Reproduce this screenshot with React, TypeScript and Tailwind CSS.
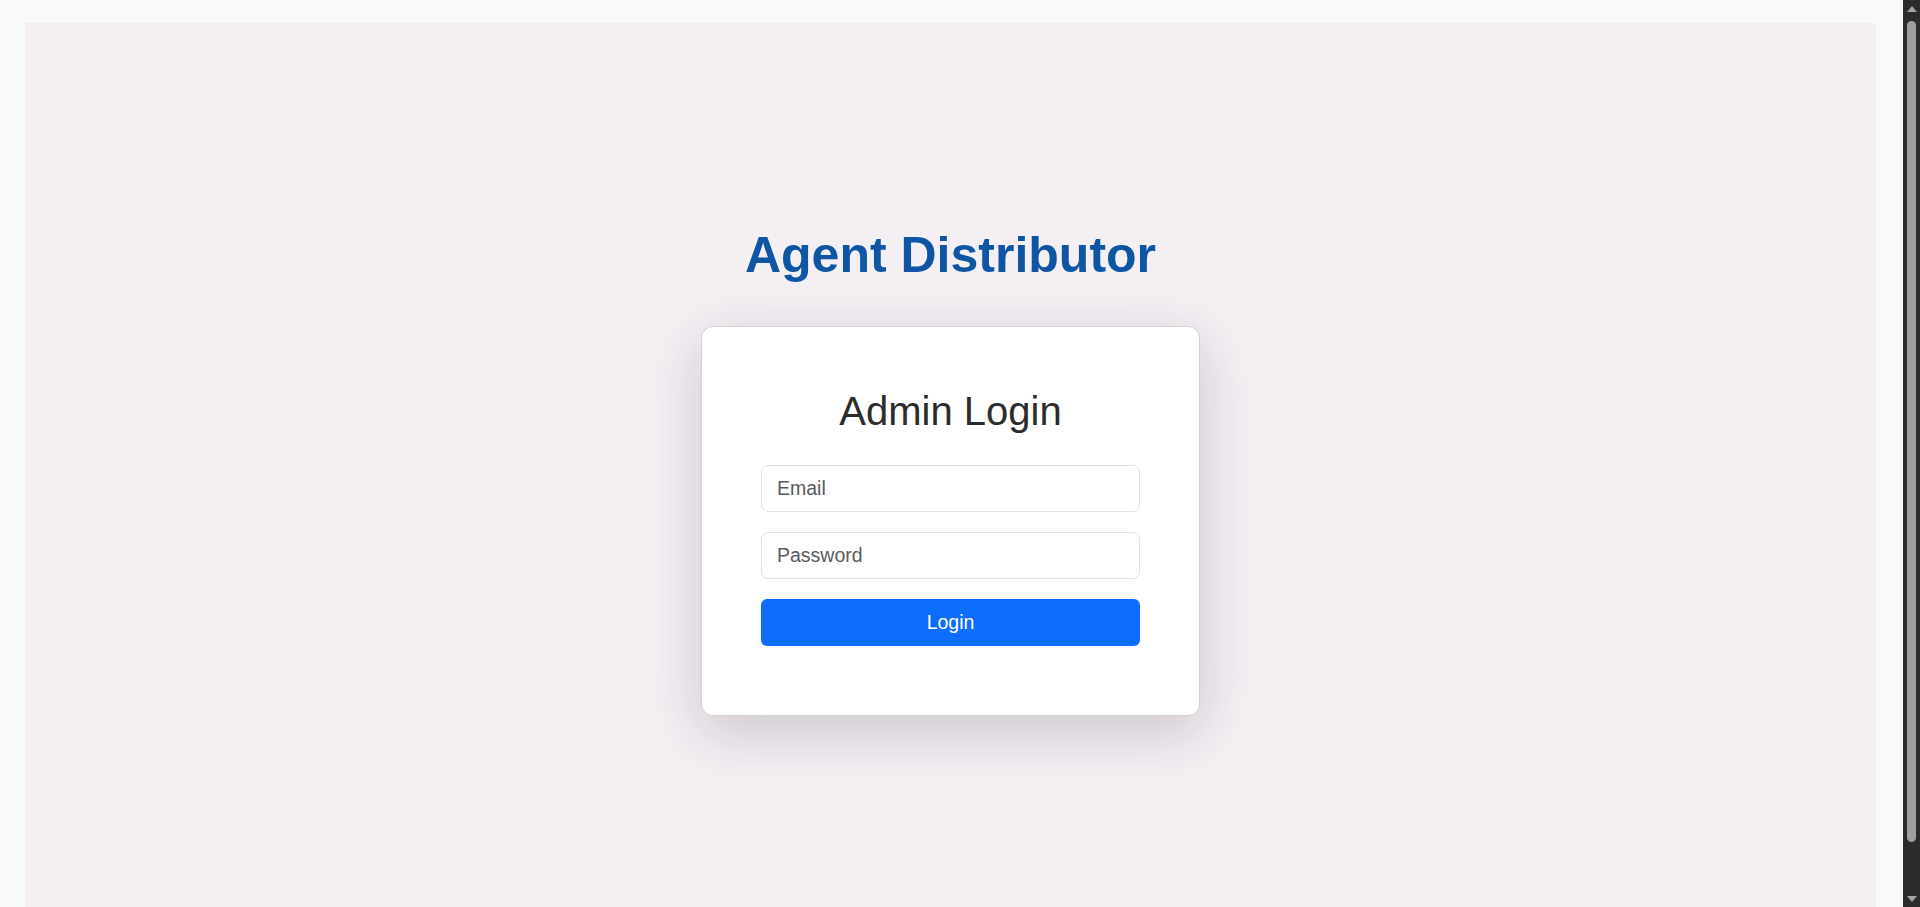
import React, { useState } from 'react';

const Scrollbar: React.FC = () => (
  <div className="w-[17px] h-full bg-[#2b2b2b] flex flex-col items-center shrink-0">
    {/* up arrow */}
    <div className="h-[17px] flex items-center justify-center">
      <div className="w-0 h-0 border-l-[5px] border-r-[5px] border-b-[6px] border-l-transparent border-r-transparent border-b-[#a3a3a3]" />
    </div>
    <div className="flex-1 w-full px-[4px] pt-[4px] pb-[48px]">
      <div className="w-full h-full bg-[#9f9f9f] rounded-full" />
    </div>
    {/* down arrow */}
    <div className="h-[17px] flex items-center justify-center">
      <div className="w-0 h-0 border-l-[5px] border-r-[5px] border-t-[6px] border-l-transparent border-r-transparent border-t-[#a3a3a3]" />
    </div>
  </div>
);

const App: React.FC = () => {
  const [email, setEmail] = useState('');
  const [password, setPassword] = useState('');

  return (
    <div className="h-screen w-full flex overflow-hidden bg-[#f8f9fa] font-['Liberation_Sans',Arial,sans-serif]">
      <div className="flex-1 flex pt-[23px] pl-[25px] pr-[27px]">
        <div className="flex-1 bg-[#f3eff3] flex flex-col items-center pt-[202px]">
          <h1 className="text-[50px] leading-[60px] font-bold text-[#0e55a4]">Agent Distributor</h1>

          {/* Login card */}
          <div className="mt-[41px] w-[499px] bg-white border border-[#d3d3d3] rounded-xl shadow-[0_16px_56px_rgba(50,30,50,0.2)] px-[59px] pt-[60px] pb-[69px]">
            <h2 className="text-[40px] leading-[48px] text-center text-[#2c2c2c]">Admin Login</h2>
            <form className="mt-[30px] flex flex-col gap-[20px]" onSubmit={(e) => e.preventDefault()}>
              <input
                type="email"
                placeholder="Email"
                value={email}
                onChange={(e) => setEmail(e.target.value)}
                className="h-[47px] w-full px-[15px] text-[19.5px] text-[#333] placeholder:text-[#595c5f] bg-white border border-[#dee2e6] rounded-[7px] outline-none"
              />
              <input
                type="password"
                placeholder="Password"
                value={password}
                onChange={(e) => setPassword(e.target.value)}
                className="h-[47px] w-full px-[15px] text-[19.5px] text-[#333] placeholder:text-[#595c5f] bg-white border border-[#dee2e6] rounded-[7px] outline-none"
              />
              <button
                type="submit"
                className="h-[47px] w-full bg-[#0d6efd] text-white text-[19.5px] rounded-[6px]"
              >
                Login
              </button>
            </form>
          </div>
        </div>
      </div>
      <Scrollbar />
    </div>
  );
};

export default App;
